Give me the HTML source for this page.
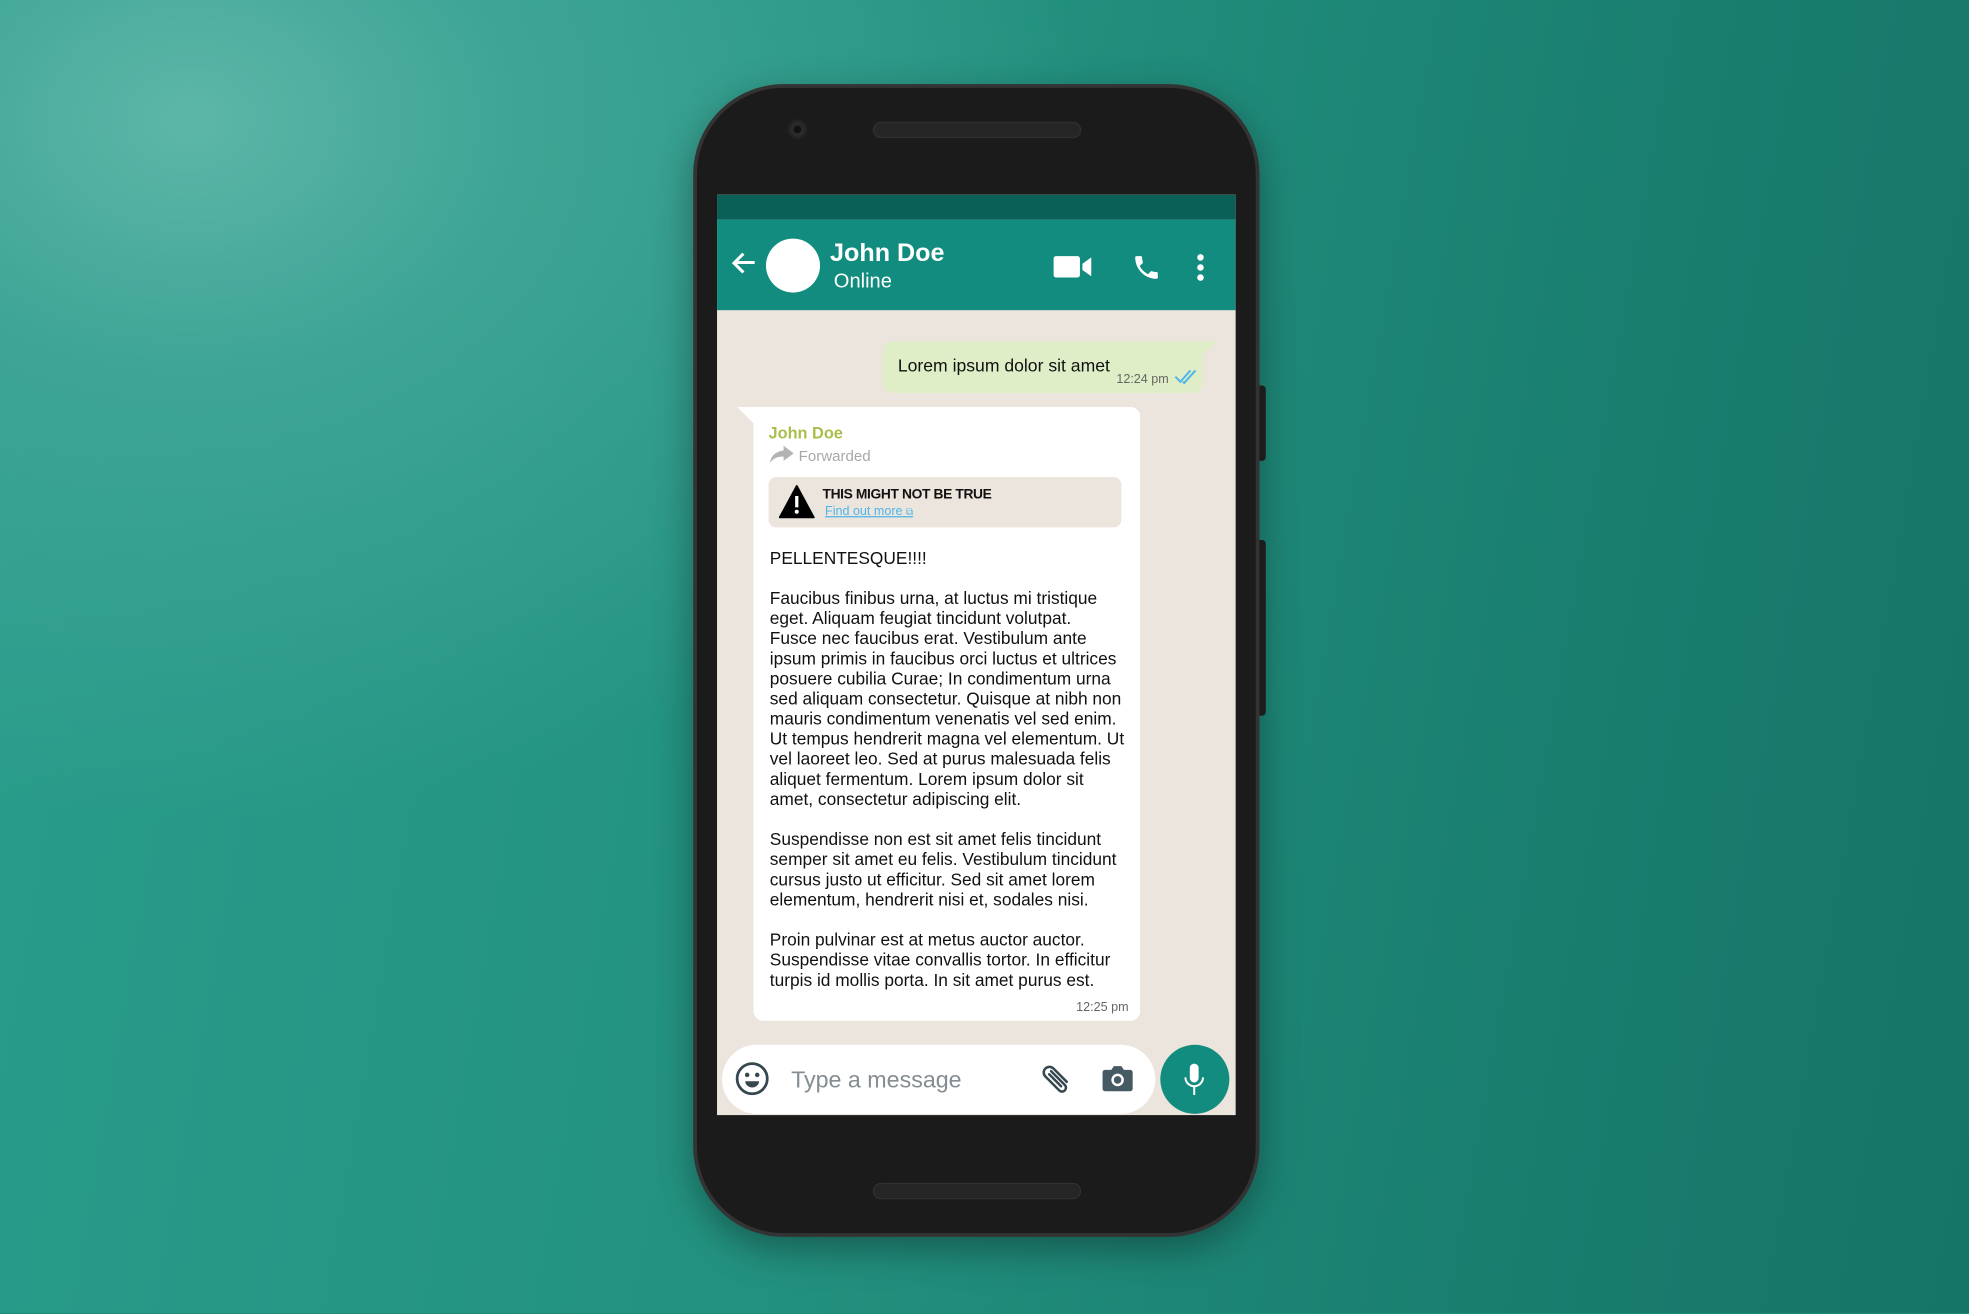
<!DOCTYPE html>
<html><head><meta charset="utf-8"><style>
*{margin:0;padding:0;box-sizing:border-box}
html,body{width:1969px;height:1313px;overflow:hidden}
body{background:#1f8a7b;font-family:"Liberation Sans",sans-serif}
#bg{position:absolute;left:0;top:0;width:1969px;height:1313px;
background:radial-gradient(ellipse 900px 700px at 190px 120px,#5db7a8 0%,#3fa596 35%,rgba(40,150,135,0) 100%),linear-gradient(100deg,#2a9d8c 0%,#23917f 45%,#1a7f70 75%,#157566 100%)}
#w{position:absolute;left:0;top:0;width:1568px;height:1046px;transform:scale(1.25574);transform-origin:0 0}
.a{position:absolute}
#phone{left:552px;top:67px;width:451px;height:918px;border-radius:72px;background:#1b1b1b;border:3px solid #333;box-shadow:0 10px 30px rgba(0,0,0,.35)}
.btn{background:#222;width:6px;border-radius:0 3px 3px 0}
.spk{background:#262626;border-radius:7px;border:1px solid #303030}
#screen{left:571px;top:155px;width:413px;height:733px;background:#ece5dd;overflow:hidden}
.t{white-space:nowrap}
#body div{height:16px;line-height:16px}
</style></head><body><div id="bg"></div>
<div id="w">
<div class="a btn" style="left:1002px;top:307px;height:60px"></div>
<div class="a btn" style="left:1002px;top:430px;height:140px"></div>
<div id="phone" class="a"></div>
<div class="a" style="left:627px;top:95px;width:16px;height:16px;border-radius:50%;background:#2a2a2a;border:2px solid #222"></div>
<div class="a" style="left:632px;top:100px;width:6px;height:6px;border-radius:50%;background:#111"></div>
<div class="a spk" style="left:695px;top:97px;width:166px;height:13px"></div>
<div class="a spk" style="left:695px;top:942px;width:166px;height:13px"></div>
<div id="screen" class="a">
 <div class="a" style="left:0;top:0;width:413px;height:20px;background:#0a5f56"></div>
 <div class="a" style="left:0;top:20px;width:413px;height:72px;background:#128c7e"></div>
 <svg class="a" style="left:10px;top:44px" width="22" height="22" viewBox="0 0 22 22"><path d="M20 10H5M11 3L3.5 10.5 11 18" stroke="#fff" stroke-width="2.4" fill="none"/></svg>
 <div class="a" style="left:39px;top:35px;width:43px;height:43px;border-radius:50%;background:#fff"></div>
 <div class="a t" style="left:90px;top:36px;color:#fff;font-size:20px;font-weight:bold">John Doe</div>
 <div class="a t" style="left:93px;top:61px;color:#fff;font-size:16px">Online</div>
 <svg class="a" style="left:268px;top:48px" width="31" height="19" viewBox="0 0 31 19"><rect x="0" y="1" width="21" height="17" rx="2" fill="#fff"/><path d="M23 7L30 2V17L23 12Z" fill="#fff"/></svg>
 <svg class="a" style="left:330px;top:46px" width="24" height="24" viewBox="0 0 24 24"><path d="M6.6 10.8c1.4 2.8 3.8 5.1 6.6 6.6l2.2-2.2c.3-.3.7-.4 1-.2 1.1.4 2.3.6 3.6.6.6 0 1 .4 1 1V20c0 .6-.4 1-1 1C10.6 21 3 13.4 3 4c0-.6.4-1 1-1h3.5c.6 0 1 .4 1 1 0 1.3.2 2.5.6 3.6.1.3 0 .7-.2 1z" fill="#fff"/></svg>
 <svg class="a" style="left:381px;top:47px" width="8" height="22" viewBox="0 0 8 22"><circle cx="4" cy="3" r="2.6" fill="#fff"/><circle cx="4" cy="11" r="2.6" fill="#fff"/><circle cx="4" cy="19" r="2.6" fill="#fff"/></svg>
 <svg class="a" style="left:132px;top:117px" width="267" height="41"><path d="M8 0H266L255 10V33a8 8 0 0 1-8 8H8a8 8 0 0 1-8-8V8a8 8 0 0 1 8-8z" fill="#dfeec6"/></svg>
 <div class="a t" style="left:144px;top:128px;font-size:14px;color:#111">Lorem ipsum dolor sit amet</div>
 <div class="a t" style="left:318px;top:142px;font-size:10px;color:#666">12:24 pm</div>
 <svg class="a" style="left:364px;top:139px" width="20" height="12" viewBox="0 0 20 12"><path d="M1 6l4 4 8-9M7 10l1 1 9-10" stroke="#4fb5ea" stroke-width="1.6" fill="none"/></svg>
 <svg class="a" style="left:16px;top:169px" width="321" height="489"><path d="M0 0H313a8 8 0 0 1 8 8V481a8 8 0 0 1-8 8H21a8 8 0 0 1-8-8V13Z" fill="#fff"/></svg>
 <div class="a t" style="left:41px;top:182px;font-size:13px;font-weight:bold;color:#a8bf4c">John Doe</div>
 <svg class="a" style="left:42px;top:200px" width="19" height="14" viewBox="0 0 19 14"><path d="M11 0L19 6 11 12V8.5C6 8.5 2.5 10 0 14 1 8 4.5 4.5 11 3.8Z" fill="#b3b3b3"/></svg>
 <div class="a t" style="left:65px;top:201px;font-size:12px;color:#a8a8a8">Forwarded</div>
 <div class="a" style="left:41px;top:225px;width:281px;height:40px;background:#ece5dd;border-radius:6px"></div>
 <svg class="a" style="left:49px;top:231px" width="29" height="27" viewBox="0 0 29 27"><path d="M14.5 1L28 26H1Z" fill="#000" stroke="#000" stroke-width="1.5" stroke-linejoin="round"/><rect x="13.2" y="9" width="2.6" height="9" fill="#fff"/><circle cx="14.5" cy="21.5" r="1.6" fill="#fff"/></svg>
 <div class="a t" style="left:84px;top:233px;font-size:11px;font-weight:bold;color:#111;letter-spacing:-.3px">THIS MIGHT NOT BE TRUE</div>
 <div class="a t" style="left:86px;top:247px;font-size:10px;color:#4fb5ea;text-decoration:underline">Find out more <span style="text-decoration:none;font-size:8px">⧉</span></div>
 <div id="body" class="a t" style="left:42px;top:282px;font-size:13.8px;color:#111">
 <div>PELLENTESQUE!!!!</div><div></div>
 <div>Faucibus finibus urna, at luctus mi tristique</div>
 <div>eget. Aliquam feugiat tincidunt volutpat.</div>
 <div>Fusce nec faucibus erat. Vestibulum ante</div>
 <div>ipsum primis in faucibus orci luctus et ultrices</div>
 <div>posuere cubilia Curae; In condimentum urna</div>
 <div>sed aliquam consectetur. Quisque at nibh non</div>
 <div>mauris condimentum venenatis vel sed enim.</div>
 <div>Ut tempus hendrerit magna vel elementum. Ut</div>
 <div>vel laoreet leo. Sed at purus malesuada felis</div>
 <div>aliquet fermentum. Lorem ipsum dolor sit</div>
 <div>amet, consectetur adipiscing elit.</div><div></div>
 <div>Suspendisse non est sit amet felis tincidunt</div>
 <div>semper sit amet eu felis. Vestibulum tincidunt</div>
 <div>cursus justo ut efficitur. Sed sit amet lorem</div>
 <div>elementum, hendrerit nisi et, sodales nisi.</div><div></div>
 <div>Proin pulvinar est at metus auctor auctor.</div>
 <div>Suspendisse vitae convallis tortor. In efficitur</div>
 <div>turpis id mollis porta. In sit amet purus est.</div>
 </div>
 <div class="a t" style="left:286px;top:642px;font-size:10px;color:#666">12:25 pm</div>
 <div class="a" style="left:4px;top:677px;width:345px;height:55px;border-radius:28px;background:#fff"></div>
 <svg class="a" style="left:14px;top:690px" width="28" height="28" viewBox="0 0 28 28"><circle cx="14" cy="14" r="12" stroke="#36474f" stroke-width="2.2" fill="none"/><circle cx="10" cy="11" r="1.8" fill="#36474f"/><circle cx="18" cy="11" r="1.8" fill="#36474f"/><path d="M8.5 16h11a5.5 5 0 0 1-11 0z" fill="#36474f"/></svg>
 <div class="a t" style="left:59px;top:694px;font-size:18.5px;color:#838d92">Type a message</div>
 <svg class="a" style="left:257px;top:690px" width="28" height="28" viewBox="0 0 28 28"><path d="M9 8l11 11a3 3 0 0 1-4.5 4.3L4.5 12.3a4.5 4.5 0 0 1 6.4-6.4l10.6 10.6M7.5 10.5l9.5 9.5" stroke="#36474f" stroke-width="2" fill="none" stroke-linecap="round"/></svg>
 <svg class="a" style="left:306px;top:692px" width="26" height="24" viewBox="0 0 26 24"><path d="M3 5h5l2-3h6l2 3h5a2 2 0 0 1 2 2v13a2 2 0 0 1-2 2H3a2 2 0 0 1-2-2V7a2 2 0 0 1 2-2z" fill="#455a63"/><circle cx="13" cy="13" r="4" stroke="#fff" stroke-width="2" fill="none"/></svg>
 <div class="a" style="left:353px;top:677px;width:55px;height:55px;border-radius:50%;background:#128c7e"></div>
 <svg class="a" style="left:368px;top:690px" width="24" height="30" viewBox="0 0 24 30"><rect x="8.5" y="2" width="7" height="15" rx="3.5" fill="#fff"/><path d="M5 13a7 7 0 0 0 14 0M12 20v7" stroke="#fff" stroke-width="1.6" fill="none"/></svg>
</div>
</div>
</body></html>
